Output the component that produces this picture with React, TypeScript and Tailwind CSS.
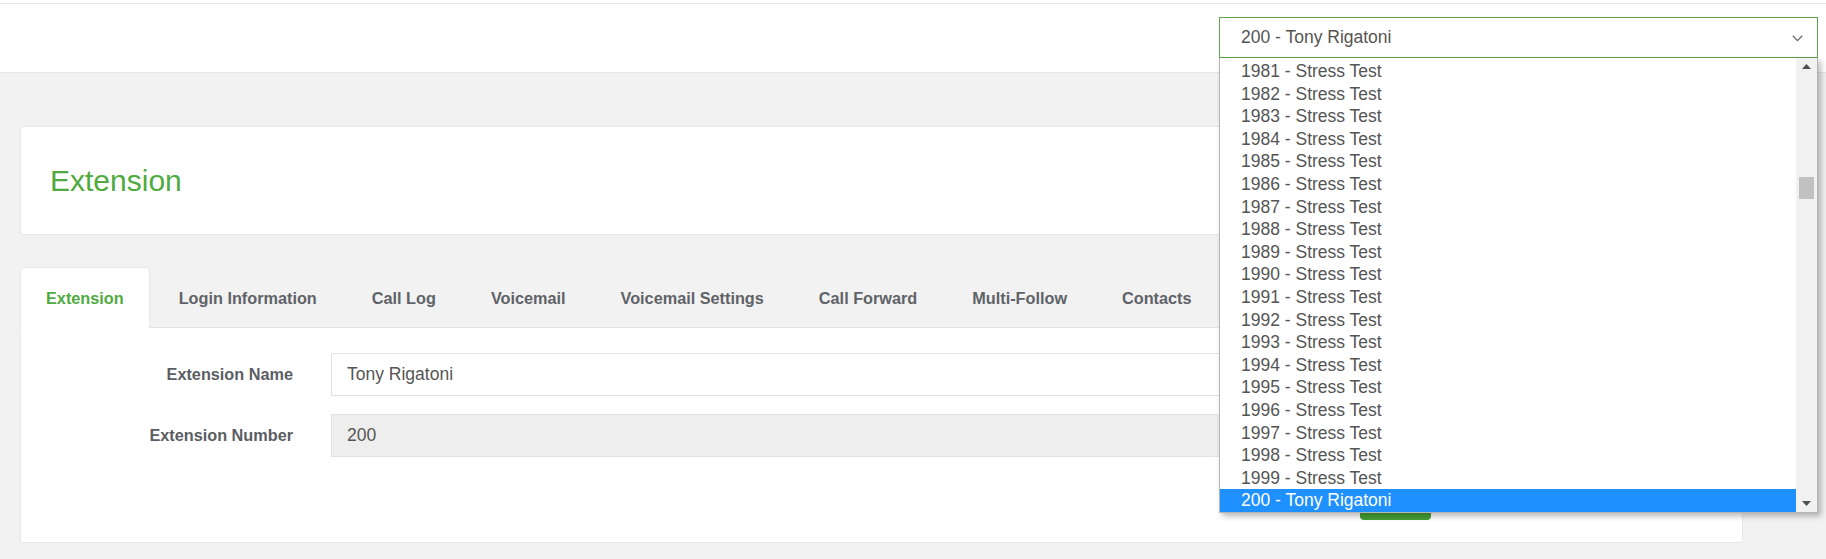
import React from "react";

const items = [
  "1981 - Stress Test",
  "1982 - Stress Test",
  "1983 - Stress Test",
  "1984 - Stress Test",
  "1985 - Stress Test",
  "1986 - Stress Test",
  "1987 - Stress Test",
  "1988 - Stress Test",
  "1989 - Stress Test",
  "1990 - Stress Test",
  "1991 - Stress Test",
  "1992 - Stress Test",
  "1993 - Stress Test",
  "1994 - Stress Test",
  "1995 - Stress Test",
  "1996 - Stress Test",
  "1997 - Stress Test",
  "1998 - Stress Test",
  "1999 - Stress Test",
  "200 - Tony Rigatoni",
];

const tabs = [
  "Extension",
  "Login Information",
  "Call Log",
  "Voicemail",
  "Voicemail Settings",
  "Call Forward",
  "Multi-Follow",
  "Contacts",
];

export default function App() {
  return (
    <div className="w-[1826px] h-[559px] bg-[#f2f2f2] overflow-hidden font-['Liberation_Sans',Arial,sans-serif]">
      {/* header */}
      <div className="bg-white pt-[3px]">
        <div className="h-[70px] border-t border-b border-[#e6e6e6] flex justify-end pt-[13px] pr-[8px]">
          <div className="relative w-[599px] h-[41px] z-10">
            <div className="h-[41px] border border-[#5ea548] bg-white flex items-center pl-[21px] pr-[14px] text-[17.5px] text-[#555]">
              <span className="flex-1">200 - Tony Rigatoni</span>
              <svg width="11" height="7" viewBox="0 0 11 7" className="mt-[1px]">
                <path d="M0.8 0.8 L5.5 5.6 L10.2 0.8" fill="none" stroke="#666" strokeWidth="1.3" />
              </svg>
            </div>
            {/* open dropdown list */}
            <div className="absolute left-0 right-0 top-[41px] h-[455px] bg-white border border-[#b5b5b5] border-t-0 shadow-[3px_3px_6px_rgba(0,0,0,0.28)] flex">
              <div className="flex-1 flex flex-col pt-[2px]">
                {items.map((it, i) => {
                  const sel = i === items.length - 1;
                  return (
                    <div
                      key={it}
                      className={
                        sel
                          ? "h-[24px] leading-[22.5px] pl-[21px] text-[17.5px] bg-[#1e90ff] text-white"
                          : "h-[22.6px] leading-[22.6px] pl-[21px] text-[17.5px] text-[#555]"
                      }
                    >
                      {it}
                    </div>
                  );
                })}
              </div>
              {/* scrollbar */}
              <div className="w-[21px] bg-[#f1f1f1] flex flex-col items-center">
                <div className="h-[17px] w-full flex items-center justify-center">
                  <svg width="9" height="5" viewBox="0 0 9 5">
                    <path d="M4.5 0 L9 5 L0 5 Z" fill="#505050" />
                  </svg>
                </div>
                <div className="mt-[102px] w-[15px] h-[22px] bg-[#c1c1c1]" />
                <div className="flex-1" />
                <div className="h-[17px] w-full flex items-center justify-center">
                  <svg width="9" height="5" viewBox="0 0 9 5">
                    <path d="M0 0 L9 0 L4.5 5 Z" fill="#505050" />
                  </svg>
                </div>
              </div>
            </div>
          </div>
        </div>
      </div>

      {/* main */}
      <div className="ml-[20px] w-[1723px]">
        <div className="mt-[53px] h-[109px] bg-white border border-[#e8e8e8] rounded-[3px] flex items-center pl-[29px]">
          <h1 className="text-[30px] text-[#4fab3f] leading-none">Extension</h1>
        </div>

        <div className="mt-[32px] flex h-[61px] border-b border-[#e3e3e3]">
          {tabs.map((t, i) => (
            <div
              key={t}
              className={
                i === 0
                  ? "h-[62px] px-[25px] mr-[3px] flex items-center text-[16.25px] font-bold text-[#4fab3f] bg-white border border-[#e8e8e8] border-b-white rounded-t-[5px]"
                  : "h-[62px] px-[25px] mr-[3px] flex items-center text-[16.25px] font-bold text-[#5f6368] border border-transparent"
              }
            >
              {t}
            </div>
          ))}
        </div>

        <div className="h-[215px] bg-white border border-t-0 border-[#e8e8e8] rounded-b-[3px] pt-[25px]">
          <div className="flex items-center">
            <div className="w-[272px] text-right text-[16.25px] font-bold text-[#5a5e63]">Extension Name</div>
            <div className="ml-[38px] w-[1110px] h-[43px] border border-[#e2e2e2] bg-white flex items-center pl-[15px] text-[17.5px] text-[#555]">
              Tony Rigatoni
            </div>
          </div>
          <div className="flex items-center mt-[18px]">
            <div className="w-[272px] text-right text-[16.25px] font-bold text-[#5a5e63]">Extension Number</div>
            <div className="ml-[38px] w-[1110px] h-[43px] border border-[#e2e2e2] bg-[#eeeeee] flex items-center pl-[15px] text-[17.5px] text-[#555]">
              200
            </div>
          </div>
          <div className="flex mt-[20px] pl-[1339px]">
            <div className="w-[71px] h-[43px] bg-[#45a035] rounded-[4px]" />
          </div>
        </div>
      </div>
    </div>
  );
}
